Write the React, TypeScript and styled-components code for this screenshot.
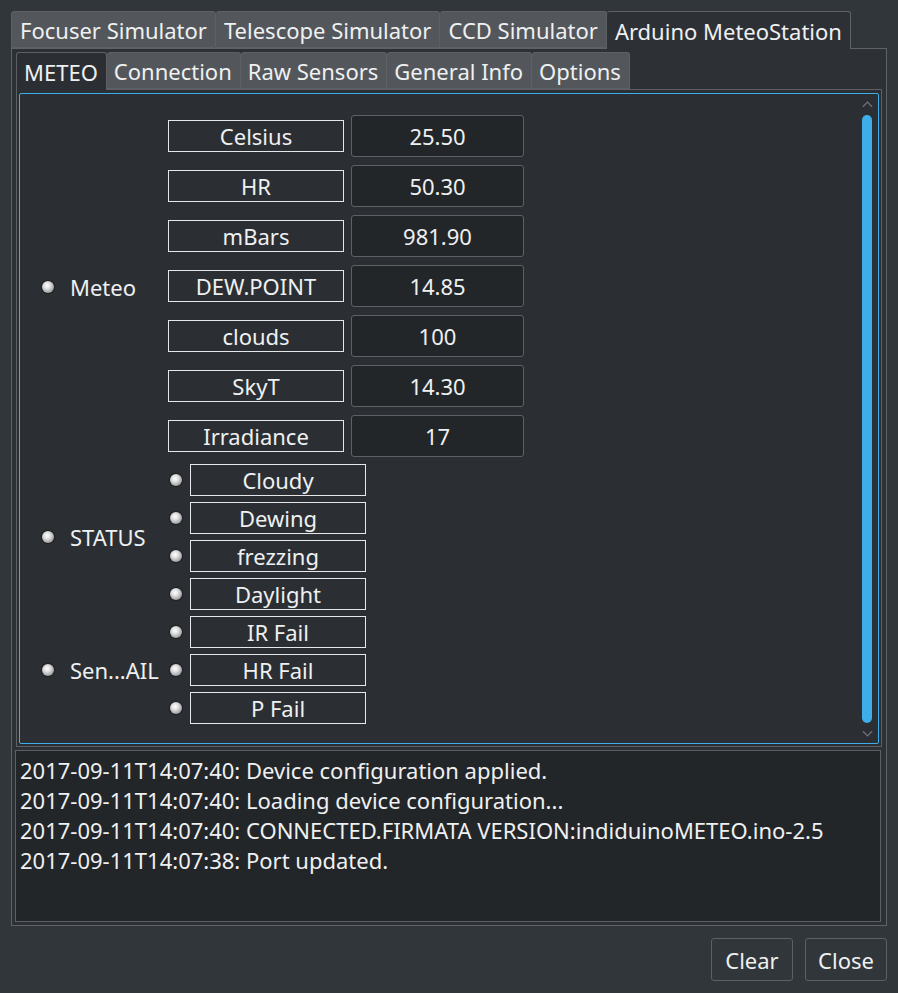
import styled, { createGlobalStyle } from "styled-components";

const GlobalStyle = createGlobalStyle`
  html, body {
    margin: 0;
    padding: 0;
    background: #31363b;
  }
  body {
    font-family: "Noto Sans", "DejaVu Sans", sans-serif;
    font-size: 22px;
    color: #eff0f1;
  }
`;

const topTabs = [
  "Focuser Simulator",
  "Telescope Simulator",
  "CCD Simulator",
  "Arduino MeteoStation",
];
const subTabs = ["METEO", "Connection", "Raw Sensors", "General Info", "Options"];

const meteo = [
  { name: "Celsius", value: "25.50" },
  { name: "HR", value: "50.30" },
  { name: "mBars", value: "981.90" },
  { name: "DEW.POINT", value: "14.85" },
  { name: "clouds", value: "100" },
  { name: "SkyT", value: "14.30" },
  { name: "Irradiance", value: "17" },
];

const status = ["Cloudy", "Dewing", "frezzing", "Daylight"];
const sensors = ["IR Fail", "HR Fail", "P Fail"];

const logLines = [
  "2017-09-11T14:07:40: Device configuration applied.",
  "2017-09-11T14:07:40: Loading device configuration...",
  "2017-09-11T14:07:40: CONNECTED.FIRMATA VERSION:indiduinoMETEO.ino-2.5",
  "2017-09-11T14:07:38: Port updated.",
];

function App() {
  return (
    <Window>
      <GlobalStyle />
      <TabBar>
        {topTabs.map((t, i) => (
          <Tab key={t} active={i === 3}>
            {t}
          </Tab>
        ))}
      </TabBar>
      <Pane>
        <SubTabBar>
          {subTabs.map((t, i) => (
            <SubTab key={t} active={i === 0}>
              {t}
            </SubTab>
          ))}
        </SubTabBar>
        <SubPane>
          <ScrollFrame>
            <Content>
              <Group>
                <GroupLabel>
                  <Led />
                  <span>Meteo</span>
                </GroupLabel>
                <MeteoRows>
                  {meteo.map((m) => (
                    <MeteoRow key={m.name}>
                      <NameBox>{m.name}</NameBox>
                      <ValueBox>{m.value}</ValueBox>
                    </MeteoRow>
                  ))}
                </MeteoRows>
              </Group>
              <Group>
                <GroupLabel>
                  <Led />
                  <span>STATUS</span>
                </GroupLabel>
                <LightRows>
                  {status.map((s) => (
                    <LightRow key={s}>
                      <Led />
                      <NameBox>{s}</NameBox>
                    </LightRow>
                  ))}
                </LightRows>
              </Group>
              <Group>
                <GroupLabel>
                  <Led />
                  <span>Sen...AIL</span>
                </GroupLabel>
                <LightRows>
                  {sensors.map((s) => (
                    <LightRow key={s}>
                      <Led />
                      <NameBox>{s}</NameBox>
                    </LightRow>
                  ))}
                </LightRows>
              </Group>
            </Content>
            <ScrollBar>
              <Arrow viewBox="0 0 12 8">
                <polyline points="1,7 6,2 11,7" />
              </Arrow>
              <Handle />
              <Arrow viewBox="0 0 12 8">
                <polyline points="1,1 6,6 11,1" />
              </Arrow>
            </ScrollBar>
          </ScrollFrame>
        </SubPane>
        <Log>
          {logLines.map((l) => (
            <LogLine key={l}>{l}</LogLine>
          ))}
        </Log>
      </Pane>
      <ButtonRow>
        <Button>Clear</Button>
        <Button>Close</Button>
      </ButtonRow>
    </Window>
  );
}

export default App;

const Window = styled.div`
  width: 898px;
  height: 993px;
  box-sizing: border-box;
  padding: 11px 11px 0 11px;
  display: flex;
  flex-direction: column;
`;

const TabBar = styled.div`
  display: flex;
  height: 37px;
`;

const Tab = styled.div<{ active?: boolean }>`
  box-sizing: border-box;
  height: ${({ active }) => (active ? "38px" : "37px")};
  margin-bottom: ${({ active }) => (active ? "-1px" : "0")};
  position: relative;
  z-index: 1;
  padding: 0 8px;
  display: flex;
  align-items: center;
  white-space: nowrap;
  background: ${({ active }) => (active ? "#2d3136" : "#53575b")};
  border: 1px solid ${({ active }) => (active ? "#5f6367" : "#5d6165")};
  border-bottom: ${({ active }) => (active ? "none" : "1px solid #5d6165")};
  border-left-width: 0;
  border-radius: 3px 3px 0 0;
  &:first-child {
    border-left-width: 1px;
  }
`;

const Pane = styled.div`
  box-sizing: border-box;
  height: 878px;
  border: 1px solid #5f6367;
  background: #2d3136;
  padding: 3px 4px 3px 4px;
  display: flex;
  flex-direction: column;
`;

const SubTabBar = styled.div`
  display: flex;
  height: 37px;
`;

const SubTab = styled.div<{ active?: boolean }>`
  box-sizing: border-box;
  height: ${({ active }) => (active ? "38px" : "37px")};
  margin-bottom: ${({ active }) => (active ? "-1px" : "0")};
  position: relative;
  z-index: 1;
  padding: 0 8px 0 7px;
  display: flex;
  align-items: center;
  white-space: nowrap;
  background: ${({ active }) => (active ? "#2b2f33" : "#53575b")};
  border: 1px solid #5d6165;
  border-bottom: ${({ active }) => (active ? "none" : "1px solid #5d6165")};
  border-left-width: 0;
  border-radius: 3px 3px 0 0;
  &:first-child {
    border-left-width: 1px;
  }
`;

const SubPane = styled.div`
  box-sizing: border-box;
  height: 658px;
  border: 1px solid #5d6165;
  background: #2b2f33;
  padding: 3px 2px 2px 2px;
  display: flex;
`;

const ScrollFrame = styled.div`
  flex: 1;
  border: 1px solid #3daee9;
  border-radius: 2px;
  display: flex;
  overflow: hidden;
`;

const Content = styled.div`
  flex: 1;
  padding: 21px 0 0 22px;
  display: flex;
  flex-direction: column;
  gap: 6px;
`;

const Group = styled.div`
  display: grid;
  grid-template-columns: 126px auto;
  align-items: center;
  justify-content: start;
`;

const GroupLabel = styled.div`
  display: flex;
  align-items: center;
  gap: 16px;
  white-space: nowrap;
`;

const Led = styled.span`
  flex: none;
  width: 12px;
  height: 12px;
  border-radius: 50%;
  background: radial-gradient(
    circle at 42% 38%,
    #ffffff 0%,
    #e2e2e2 30%,
    #a9a9a9 65%,
    #6a6a6a 100%
  );
  box-shadow: 0 0 1px 1px rgba(20, 22, 24, 0.6);
`;

const MeteoRows = styled.div`
  display: flex;
  flex-direction: column;
  gap: 8px;
  margin-bottom: 1px;
`;

const MeteoRow = styled.div`
  display: flex;
  align-items: center;
  gap: 7px;
  height: 42px;
`;

const NameBox = styled.div`
  box-sizing: border-box;
  width: 176px;
  height: 32px;
  border: 1px solid #e6e7e8;
  display: flex;
  align-items: center;
  justify-content: center;
  white-space: nowrap;
`;

const ValueBox = styled.div`
  box-sizing: border-box;
  width: 173px;
  height: 42px;
  border: 1px solid #5d6165;
  border-radius: 3px;
  background: #232629;
  display: flex;
  align-items: center;
  justify-content: center;
`;

const LightRows = styled.div`
  display: flex;
  flex-direction: column;
  gap: 6px;
  padding-left: 2px;
`;

const LightRow = styled.div`
  display: flex;
  align-items: center;
  gap: 8px;
`;

const ScrollBar = styled.div`
  width: 18px;
  margin-right: 2px;
  display: flex;
  flex-direction: column;
  align-items: center;
  padding: 6px 0 5px 0;
  gap: 7px;
`;

const Arrow = styled.svg`
  width: 11px;
  height: 8px;
  fill: none;
  stroke: #6e7377;
  stroke-width: 1.4;
`;

const Handle = styled.div`
  flex: 1;
  width: 10px;
  border-radius: 5px;
  background: #3daee9;
`;

const Log = styled.div`
  box-sizing: border-box;
  margin-top: 3px;
  height: 172px;
  margin-left: -1px;
  margin-right: 1px;
  border: 1px solid #5d6165;
  background: #232629;
  padding: 4px 4px;
`;

const LogLine = styled.div`
  line-height: 30px;
  white-space: nowrap;
`;

const ButtonRow = styled.div`
  display: flex;
  justify-content: flex-end;
  gap: 12px;
  margin-top: 12px;
`;

const Button = styled.button`
  box-sizing: border-box;
  width: 82px;
  height: 43px;
  border: 1px solid #5d6165;
  border-radius: 3px;
  background: #31363b;
  color: #eff0f1;
  font-family: inherit;
  font-size: 22px;
  padding: 0;
`;
